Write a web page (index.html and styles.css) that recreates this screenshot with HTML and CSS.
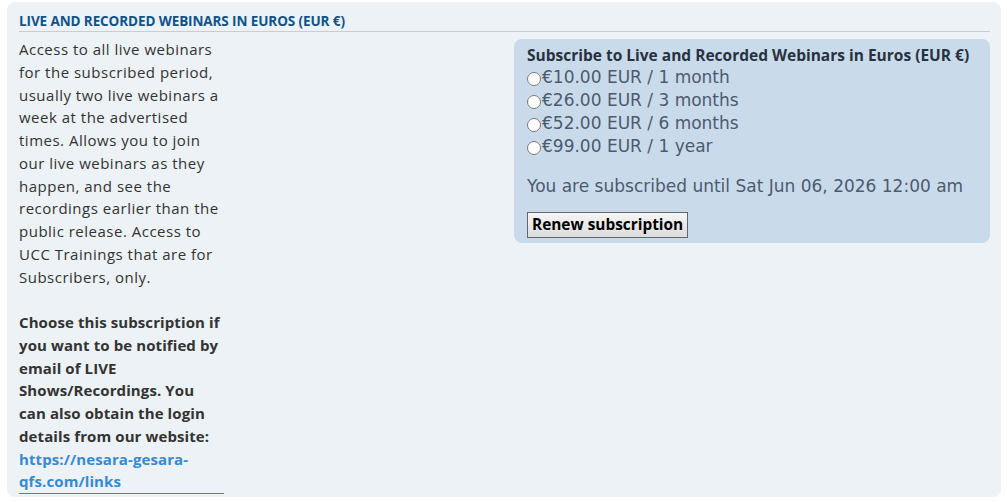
FILE: index.html
```html
<!DOCTYPE html>
<html>
<head>
<meta charset="utf-8">
<title>Subscriptions</title>
<link rel="stylesheet" href="styles.css">
</head>
<body>
<div class="panel">
  <h3 class="panel-title">Live and Recorded Webinars in Euros (EUR €)</h3>
  <div class="panel-body">
    <div class="desc">
      <p>Access to all live webinars for the subscribed period, usually two live webinars a week at the advertised times. Allows you to join our live webinars as they happen, and see the recordings earlier than the public release. Access to UCC Trainings that are for Subscribers, only.</p>
      <p class="strong">Choose this subscription if you want to be notified by email of LIVE Shows/Recordings. You can also obtain the login details from our website: <a href="#">https://nesara-gesara-qfs.com/links</a></p>
    </div>
    <form class="subbox">
      <div class="subbox-title">Subscribe to Live and Recorded Webinars in Euros (EUR €)</div>
      <label class="opt"><input type="radio" name="term">€10.00 EUR / 1 month</label>
      <label class="opt"><input type="radio" name="term">€26.00 EUR / 3 months</label>
      <label class="opt"><input type="radio" name="term">€52.00 EUR / 6 months</label>
      <label class="opt"><input type="radio" name="term">€99.00 EUR / 1 year</label>
      <p class="status">You are subscribed until Sat Jun 06, 2026 12:00 am</p>
      <button type="button" class="btn">Renew subscription</button>
    </form>
  </div>
</div>
</body>
</html>
```

FILE: styles.css
```css
*{margin:0;padding:0;box-sizing:border-box;}
body{background:#fff;font-family:"Open Sans","DejaVu Sans",sans-serif;color:#333;}
.panel{margin:2px 6px 0 7px;height:495px;background:#ecf2f5;border-radius:8px;padding:11px 11px 0 12px;}
.panel-title{font-family:"Open Sans",sans-serif;font-size:13.5px;font-weight:bold;text-transform:uppercase;color:#105289;border-bottom:1px solid #ccc;padding-bottom:1px;line-height:17px;letter-spacing:-0.1px;}
.panel-body{display:flex;justify-content:space-between;padding-top:6px;}
.desc{width:205px;font-size:15px;letter-spacing:0.5px;line-height:22.75px;color:#333;border-bottom:1px solid #368ad2;}
.desc p{margin-bottom:22.75px;}
.desc p.strong{font-weight:bold;letter-spacing:0.1px;margin-bottom:0;}
.desc a{color:#368ad2;text-decoration:none;}
.subbox{width:476px;margin-top:1px;background:#c9dbea;border-radius:8px;padding:5px 13px 5px 13px;align-self:flex-start;}
.subbox-title{font-weight:bold;font-size:15.5px;line-height:22px;color:#28313f;}
.opt{display:flex;align-items:center;font-family:"DejaVu Sans",sans-serif;font-size:17px;line-height:23px;color:#4c5a70;}
.opt input{width:14px;height:14px;margin:2px 1px 0 0;}
.status{font-family:"DejaVu Sans",sans-serif;font-size:17px;line-height:23px;color:#4c5a70;margin:17px 0 14px;}
.btn{font-family:"Open Sans",sans-serif;font-weight:bold;font-size:15.4px;color:#000;padding:1px 4px;border:1px solid #666;background:linear-gradient(#f5f5f5,#dcdcdc);line-height:22px;}
```
